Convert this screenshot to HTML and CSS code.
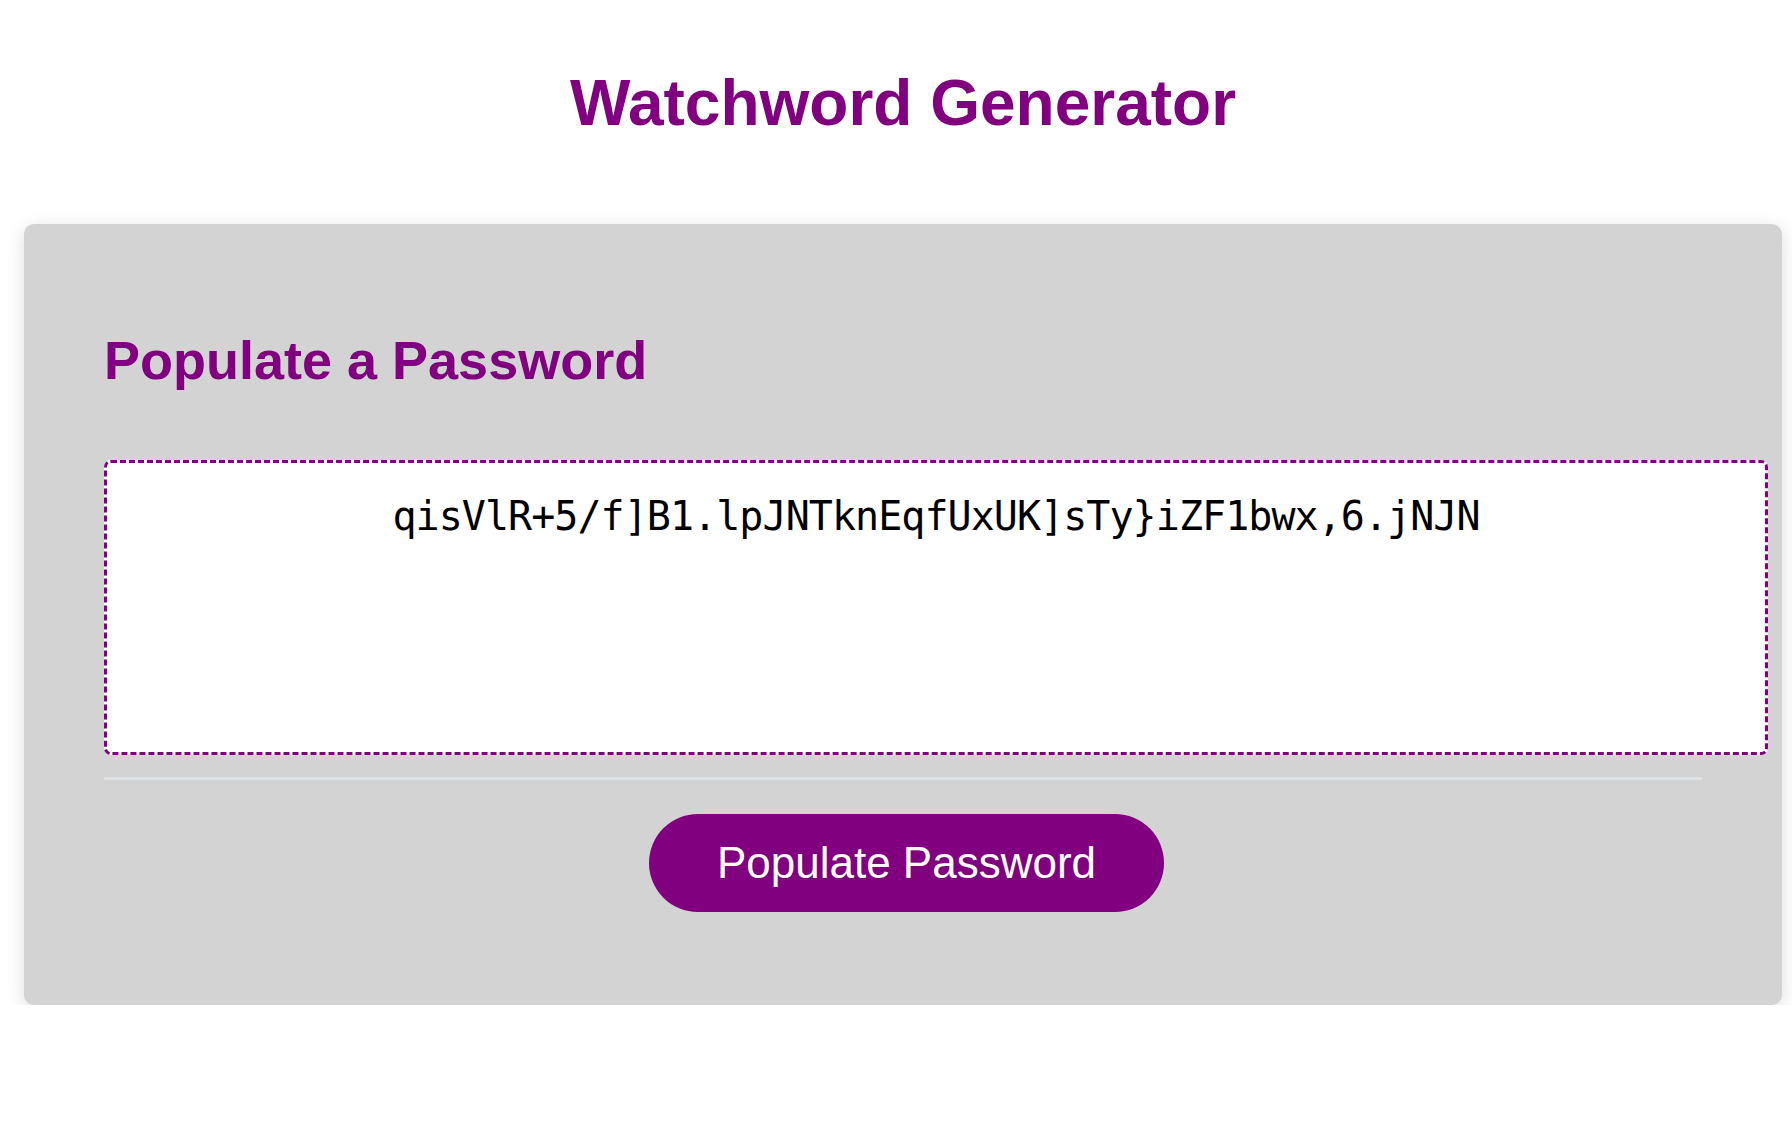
FILE: index.html
```html
<!DOCTYPE html>
<html lang="en">
<head>
<meta charset="UTF-8">
<title>Watchword Generator</title>
<link rel="stylesheet" href="styles.css">
</head>
<body>
<div class="wrapper">
  <header class="page-header">
    <h1 class="title">Watchword Generator</h1>
  </header>
  <div class="card">
    <h2 class="card-title">Populate a Password</h2>
    <textarea class="password" readonly>qisVlR+5/f]B1.lpJNTknEqfUxUK]sTy}iZF1bwx,6.jNJN</textarea>
    <div class="divider"></div>
    <div class="card-footer">
      <button class="btn" type="button">Populate Password</button>
    </div>
  </div>
</div>
</body>
</html>
```

FILE: styles.css
```css
* {
  box-sizing: border-box;
}

body {
  margin: 0;
  background: #ffffff;
  font-family: "Liberation Sans", Arial, Helvetica, sans-serif;
}

.wrapper {
  padding: 0 10px 0 24px;
}

.title {
  margin: 0 0 85px;
  padding-top: 68px;
  text-align: center;
  font-size: 64px;
  line-height: 71px;
  font-weight: bold;
  color: #800080;
}

.card {
  background: #d3d3d3;
  border-radius: 10px;
  box-shadow: 0 4px 18px rgba(0, 0, 0, 0.14);
  padding: 106px 80px 93px 80px;
}

.card-title {
  margin: 0 0 69px;
  font-size: 54px;
  line-height: 61px;
  font-weight: bold;
  color: #800080;
}

.password {
  display: block;
  box-sizing: content-box;
  width: 100%;
  height: 229px;
  margin: 0;
  padding: 30px;
  border: 3px dashed #800080;
  border-radius: 7px;
  background: #ffffff;
  color: #000000;
  font-family: "DejaVu Sans Mono", "Liberation Mono", monospace;
  font-size: 40px;
  letter-spacing: -0.95px;
  text-align: center;
  resize: none;
  outline: none;
}

.divider {
  margin-top: 22px;
  height: 3px;
  background: #e0e3e6;
}

.card-footer {
  display: flex;
  justify-content: center;
  padding: 34px 0 0 7px;
}

.btn {
  padding: 24px 68px;
  border: none;
  border-radius: 50px;
  background: #800080;
  color: #ffffff;
  font-family: "Liberation Sans", Arial, Helvetica, sans-serif;
  font-size: 44px;
  line-height: normal;
  cursor: pointer;
}
```
